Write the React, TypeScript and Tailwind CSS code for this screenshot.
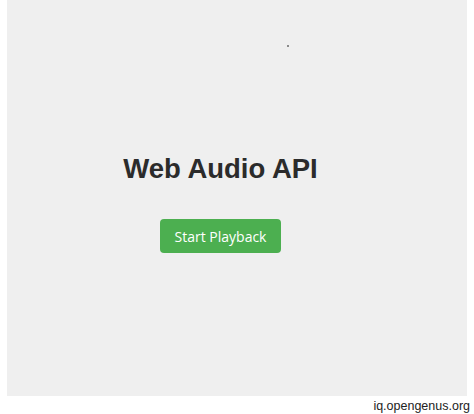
export default function App() {
  return (
    <div className="h-[414px] w-[474px] bg-white flex flex-col">
      <main className="mx-[7px] h-[396px] bg-[#efefef] flex flex-col items-center pt-[152px] pr-[33px] relative">
        {/* stray pixel near the top */}
        <span className="absolute left-[280px] top-[45px] h-[2px] w-[2px] bg-[#8a8a8a]" />
        <h1 className="text-[27.5px] leading-[34px] font-bold text-[#2b2b2b] font-['Liberation_Sans',Arial,sans-serif]">
          Web Audio API
        </h1>
        <button className="mt-[33px] h-[34px] w-[121px] rounded-[4px] bg-[#4caf50] text-white text-[14px] font-['Open_Sans',sans-serif]">
          Start Playback
        </button>
      </main>
      <p className="mt-[2px] pr-[4px] text-right text-[12.5px] leading-[16px] text-[#222] font-['Liberation_Sans',Arial,sans-serif]">
        iq.opengenus.org
      </p>
    </div>
  );
}
